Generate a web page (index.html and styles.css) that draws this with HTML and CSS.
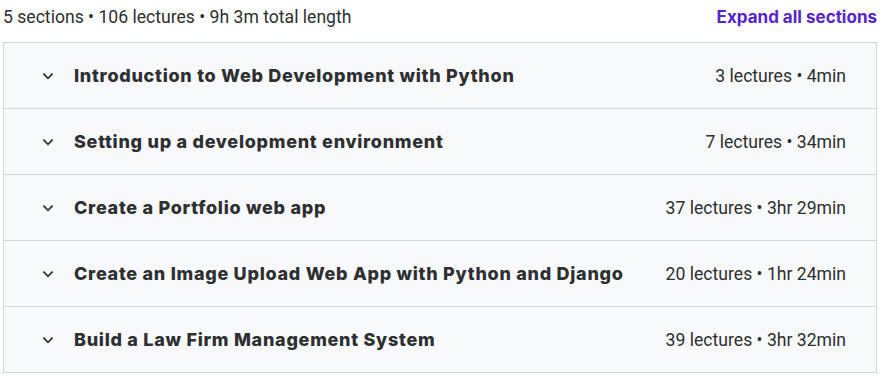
FILE: index.html
```html
<!DOCTYPE html>
<html>
<head>
    <title>Course content</title>
    <link rel="stylesheet" href="styles.css">
</head>
<body>
    <div class="curriculum">
        <div class="summary">
            <span>5 sections • 106 lectures • 9h 3m total length</span>
            <button class="expand">Expand all sections</button>
        </div>

        <div class="sections">
            <div class="section">
                <svg class="chevron" viewBox="0 0 24 24"><path d="M7 9.5l5 5 5-5"/></svg>
                <span class="title">Introduction to Web Development with Python</span>
                <span class="meta">3 lectures • 4min</span>
            </div>
            <div class="section">
                <svg class="chevron" viewBox="0 0 24 24"><path d="M7 9.5l5 5 5-5"/></svg>
                <span class="title">Setting up a development environment</span>
                <span class="meta">7 lectures • 34min</span>
            </div>
            <div class="section">
                <svg class="chevron" viewBox="0 0 24 24"><path d="M7 9.5l5 5 5-5"/></svg>
                <span class="title">Create a Portfolio web app</span>
                <span class="meta">37 lectures • 3hr 29min</span>
            </div>
            <div class="section">
                <svg class="chevron" viewBox="0 0 24 24"><path d="M7 9.5l5 5 5-5"/></svg>
                <span class="title">Create an Image Upload Web App with Python and Django</span>
                <span class="meta">20 lectures • 1hr 24min</span>
            </div>
            <div class="section">
                <svg class="chevron" viewBox="0 0 24 24"><path d="M7 9.5l5 5 5-5"/></svg>
                <span class="title">Build a Law Firm Management System</span>
                <span class="meta">39 lectures • 3hr 32min</span>
            </div>
        </div>
    </div>
</body>
</html>
```

FILE: styles.css
```css
body {
    margin: 0;
    background: #fff;
    color: #2d2f31;
    font-family: "Roboto", "Liberation Sans", sans-serif;
}
.curriculum {
    padding: 0 4px 0 3px;
}
.summary {
    display: flex;
    justify-content: space-between;
    align-items: center;
    height: 34px;
    font-size: 17.6px;
    margin-bottom: 8px;
}
.expand {
    border: none;
    background: none;
    padding: 0;
    color: #5624d0;
    font-family: "Inter", sans-serif;
    font-weight: 700;
    font-size: 17px;
    cursor: pointer;
}
.sections {
    border: 1px solid #d1d7dc;
    border-bottom: none;
}
.section {
    display: flex;
    align-items: center;
    height: 65px;
    padding: 0 30px 0 33px;
    background: #f7f9fa;
    border-bottom: 1px solid #d1d7dc;
}
.chevron {
    width: 22px;
    height: 22px;
    fill: none;
    stroke: #2d2f31;
    stroke-width: 2;
    margin-right: 15px;
}
.title {
    flex: 1;
    font-family: "Inter", sans-serif;
    font-weight: 800;
    font-size: 18px;
    letter-spacing: 0.72px;
}
.meta {
    font-size: 17.6px;
}
```
